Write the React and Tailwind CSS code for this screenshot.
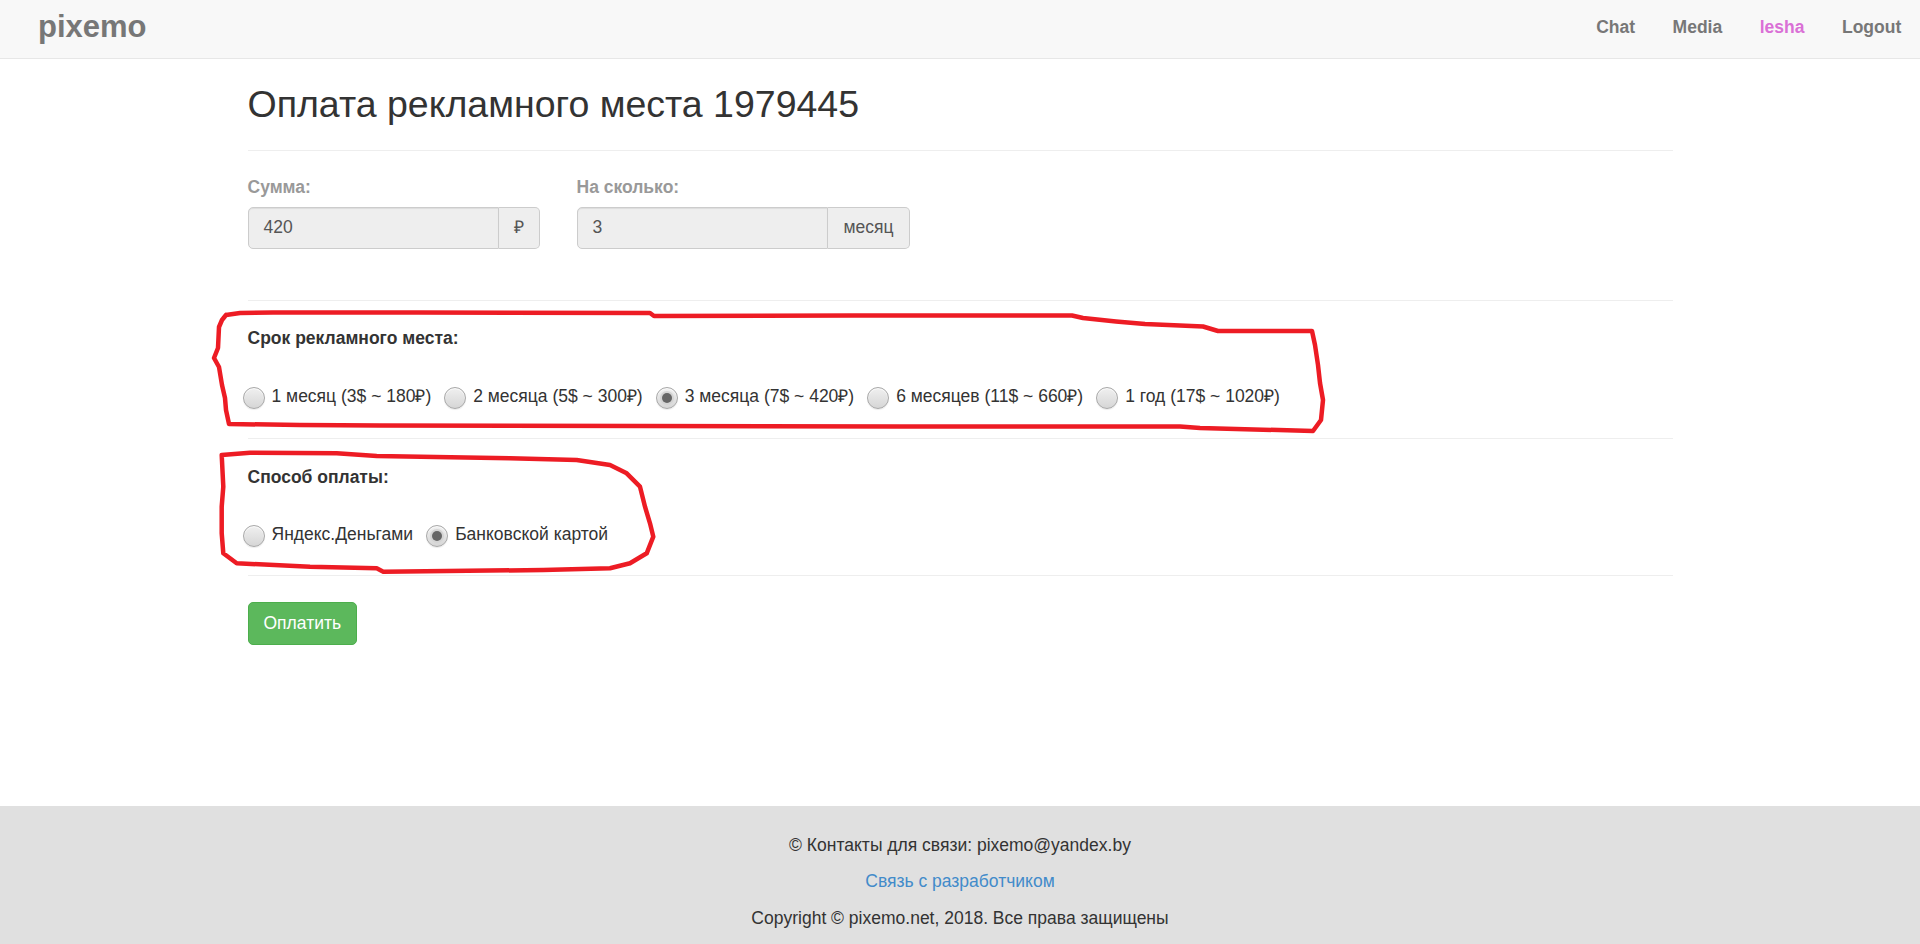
import { useState } from 'react'

const TERMS = [
  { id: 1, label: '1 месяц (3$ ~ 180₽)' },
  { id: 2, label: '2 месяца (5$ ~ 300₽)' },
  { id: 3, label: '3 месяца (7$ ~ 420₽)' },
  { id: 6, label: '6 месяцев (11$ ~ 660₽)' },
  { id: 12, label: '1 год (17$ ~ 1020₽)' },
]

const METHODS = [
  { id: 'yandex', label: 'Яндекс.Деньгами' },
  { id: 'card', label: 'Банковской картой' },
]

// Old-style grey radio button
const Radio = ({ checked, onClick, label }) => (
  <label onClick={onClick} className="flex items-center cursor-pointer">
    <span className="mt-[3px] w-[22px] h-[22px] rounded-full border border-[#a8a8a8] bg-gradient-to-b from-[#f0f0f0] to-[#d6d6d6] shadow-[inset_0_1px_1px_rgba(255,255,255,0.8),0_1px_1px_rgba(0,0,0,0.08)] flex items-center justify-center flex-shrink-0">
      {checked && (
        <span className="w-[14px] h-[14px] rounded-full bg-[#d4d4d4] flex items-center justify-center">
          <span className="w-[10px] h-[10px] rounded-full bg-[#666]" />
        </span>
      )}
    </span>
    <span className="ml-[7px] text-[#333]">{label}</span>
  </label>
)

const InputGroup = ({ value, addon, width }) => (
  <div className={`flex h-[42.5px] ${width}`}>
    <div className="flex-1 flex items-center px-[15px] bg-[#eee] border border-[#ccc] rounded-l-[5px] text-[#555] shadow-[inset_0_1px_1px_rgba(0,0,0,0.075)]">
      {value}
    </div>
    <div className="flex items-center px-[15px] bg-[#eee] border border-l-0 border-[#ccc] rounded-r-[5px] text-[#555]">
      {addon}
    </div>
  </div>
)

// hand-drawn red marks on top of the screenshot
const Scribbles = () => (
  <svg className="absolute inset-0 pointer-events-none" width="1920" height="944" viewBox="0 0 1920 944" fill="none" stroke="#ed1c24" strokeWidth="4.5" strokeLinejoin="round" strokeLinecap="round">
    <polyline points="226,315 240,313 273,312.5 418,312.5 650,313 654,316 854,315.5 1072,315.5 1083,318 1116,321.5 1145,324 1203,326.5 1218,331 1312,331 1315,345 1318,365 1320,383 1323,400 1321,420 1313,431 1200,428 1180,426.5 900,426.5 640,426 380,425.5 300,425 229,424 226,410 225,398 222,385 219,367 214,358 218,348 219,327 222,320 226,315" />
    <polyline points="221.7,455 250,452.7 336.7,453.3 376.7,456 510,458.3 576.7,460 610,465 626.7,473.3 640,486.7 645,506.7 650,523.3 653.3,536.7 646.7,553.3 630,563.3 610,568.3 543.3,570 383.3,571.7 376.7,568.3 310,566.7 236.7,563.3 223.3,553.3 221.7,533.3 221.7,506.7 223.3,486.7 221.7,455" />
  </svg>
)

export default function App() {
  const [term, setTerm] = useState(3)
  const [method, setMethod] = useState('card')

  return (
    <div className="relative min-h-[944px] flex flex-col bg-white font-['Liberation_Sans',Arial,sans-serif] text-[17.5px] leading-[25px] text-[#333]">
      {/* Navbar */}
      <nav className="h-[59px] flex items-center justify-between bg-[#f8f8f8] border-b border-[#e7e7e7]">
        <a className="pl-[38px] pb-[5px] text-[31px] leading-[31px] font-bold text-[#777]">pixemo</a>
        <div className="flex items-center pb-[4px] font-bold text-[#777]">
          <a className="px-[18.75px]">Chat</a>
          <a className="px-[18.75px]">Media</a>
          <a className="px-[18.75px] text-[#da70d6]">lesha</a>
          <a className="px-[18.75px]">Logout</a>
        </div>
      </nav>

      <main className="flex-1">
        <div className="w-[1425px] mx-auto">
          <h2 className="mt-[25px] pb-[25px] border-b border-[#eee] text-[37.5px] leading-[41px] font-normal text-[#333]">
            Оплата рекламного места 1979445
          </h2>

          {/* Amount / duration */}
          <div className="pt-[23.5px] pb-[51px] border-b border-[#eee] flex gap-[37px]">
            <div>
              <div className="mb-[7px] font-bold text-[#999]">Сумма:</div>
              <InputGroup value="420" addon="₽" width="w-[292px]" />
            </div>
            <div>
              <div className="mb-[7px] font-bold text-[#999]">На сколько:</div>
              <InputGroup value="3" addon="месяц" width="w-[333px]" />
            </div>
          </div>

          {/* Term */}
          <div className="pt-[25px] pb-[29px] border-b border-[#eee]">
            <div className="font-bold">Срок рекламного места:</div>
            <div className="mt-[32.5px] -ml-[5px] flex gap-[13px]">
              {TERMS.map(t => (
                <Radio key={t.id} label={t.label} checked={term === t.id} onClick={() => setTerm(t.id)} />
              ))}
            </div>
          </div>

          {/* Payment method */}
          <div className="pt-[26.5px] pb-[28px] border-b border-[#eee]">
            <div className="font-bold">Способ оплаты:</div>
            <div className="mt-[32px] -ml-[5px] flex gap-[13px]">
              {METHODS.map(m => (
                <Radio key={m.id} label={m.label} checked={method === m.id} onClick={() => setMethod(m.id)} />
              ))}
            </div>
          </div>

          <button className="mt-[26px] h-[42.5px] px-[15px] bg-[#5cb85c] border border-[#4cae4c] rounded-[5px] text-white">
            Оплатить
          </button>
        </div>
      </main>

      {/* Footer */}
      <footer className="h-[138px] pt-[26.5px] bg-[#e0e0e0] text-center text-[#333]">
        <p className="mb-[11.7px]">© Контакты для связи: pixemo@yandex.by</p>
        <p className="mb-[11.7px]"><a className="text-[#428bca]">Связь с разработчиком</a></p>
        <p>Copyright © pixemo.net, 2018. Все права защищены</p>
      </footer>

      <Scribbles />
    </div>
  )
}
